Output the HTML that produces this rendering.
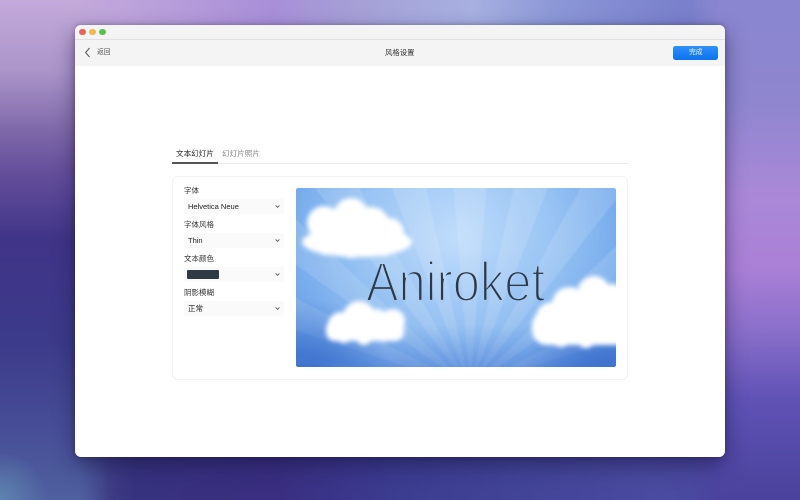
<!DOCTYPE html>
<html lang="zh"><head><meta charset="utf-8"><title>风格设置</title>
<style>
*{box-sizing:border-box;margin:0;padding:0}
html,body{width:800px;height:500px;overflow:hidden;background:#4a3f9c;font-family:"Liberation Sans","Noto Sans CJK SC",sans-serif}
#root{position:absolute;left:0;top:0;width:800px;height:500px;overflow:hidden}
#bg{position:absolute;left:0;top:0;display:block}
#win{position:absolute;left:75px;top:25px;width:650px;height:432px;background:#fff;border-radius:6px;overflow:hidden;box-shadow:0 8px 20px rgba(20,15,60,.5),0 0 5px rgba(20,15,60,.3)}
#tb{position:absolute;left:0;top:0;width:650px;height:41px;background:#f4f4f5}
#line{position:absolute;left:0;top:14px;width:650px;height:1px;background:#e0e0e2}
.dot{position:absolute;top:4px;width:6.4px;height:6.4px;border-radius:50%}
.t{position:absolute;white-space:nowrap;line-height:10px;filter:blur(.25px)}
.sel{position:absolute;left:184px;width:100px;height:15px;background:#fafafa;border-radius:2px;font-size:7.5px;line-height:15px;padding-left:4px;color:#222;white-space:nowrap}
.sel svg{position:absolute;left:91px;top:5px}
.lb{position:absolute;left:184px;font-size:7.5px;line-height:10px;color:#333;white-space:nowrap;filter:blur(.25px)}
#page{position:absolute;left:0;top:0;width:800px;height:500px;overflow:hidden}
</style></head><body><div id="root">
<svg id="bg" width="800" height="500" viewBox="0 0 800 500">
<defs>
<linearGradient id="gt" x1="0" y1="0" x2="800" y2="0" gradientUnits="userSpaceOnUse">
<stop offset="0" stop-color="#c5acdb"/><stop offset=".16" stop-color="#bda3da"/><stop offset=".34" stop-color="#a88fd8"/><stop offset=".44" stop-color="#a59fd6"/><stop offset=".59" stop-color="#a7b0e0"/><stop offset=".7" stop-color="#8a96d6"/><stop offset=".85" stop-color="#7a80cc"/><stop offset="1" stop-color="#8a82cc"/></linearGradient>
<linearGradient id="gb" x1="0" y1="0" x2="800" y2="0" gradientUnits="userSpaceOnUse">
<stop offset="0" stop-color="#4a5896"/><stop offset=".1" stop-color="#45488c"/><stop offset=".17" stop-color="#37327e"/><stop offset=".34" stop-color="#392e80"/><stop offset=".5" stop-color="#3c3c90"/><stop offset=".65" stop-color="#424498"/><stop offset=".82" stop-color="#4a4aa0"/><stop offset="1" stop-color="#4c469e"/></linearGradient>
<linearGradient id="gl" x1="0" y1="0" x2="0" y2="500" gradientUnits="userSpaceOnUse">
<stop offset="0" stop-color="#c4aadb"/><stop offset=".14" stop-color="#ab95c9"/><stop offset=".26" stop-color="#8069aa"/><stop offset=".34" stop-color="#66509c"/><stop offset=".48" stop-color="#403488"/><stop offset=".68" stop-color="#3c3a8a"/><stop offset=".84" stop-color="#464c96"/><stop offset="1" stop-color="#4f609e"/></linearGradient>
<linearGradient id="gr" x1="0" y1="0" x2="0" y2="500" gradientUnits="userSpaceOnUse">
<stop offset="0" stop-color="#8a86d0"/><stop offset=".2" stop-color="#8e86cf"/><stop offset=".4" stop-color="#ab88d8"/><stop offset=".54" stop-color="#a97fd6"/><stop offset=".66" stop-color="#8a6fca"/><stop offset=".8" stop-color="#5f52b5"/><stop offset="1" stop-color="#4a429c"/></linearGradient>
<radialGradient id="gc" gradientUnits="userSpaceOnUse" cx="0" cy="500" r="48"><stop offset="0" stop-color="#5e84b0"/><stop offset="1" stop-color="#5e84b0" stop-opacity="0"/></radialGradient>
<linearGradient id="ml" x1="0" y1="0" x2="110" y2="0" gradientUnits="userSpaceOnUse"><stop offset=".72" stop-color="#fff"/><stop offset="1" stop-color="#000"/></linearGradient>
<linearGradient id="mr" x1="690" y1="0" x2="800" y2="0" gradientUnits="userSpaceOnUse"><stop offset="0" stop-color="#000"/><stop offset=".28" stop-color="#fff"/></linearGradient>
<mask id="mL" maskUnits="userSpaceOnUse" x="0" y="0" width="800" height="500"><rect width="800" height="500" fill="url(#ml)"/></mask>
<mask id="mR" maskUnits="userSpaceOnUse" x="0" y="0" width="800" height="500"><rect width="800" height="500" fill="url(#mr)"/></mask>
</defs>
<rect width="800" height="250" fill="url(#gt)"/>
<rect y="250" width="800" height="250" fill="url(#gb)"/>
<rect width="110" height="500" fill="url(#gl)" mask="url(#mL)"/>
<rect x="690" width="110" height="500" fill="url(#gr)" mask="url(#mR)"/>
<rect y="440" width="60" height="60" fill="url(#gc)"/>
</svg>

<div id="win">
<div id="tb"></div>
<div id="line"></div>
<div class="dot" style="left:4.4px;background:#e7655c"></div>
<div class="dot" style="left:14.4px;background:#f3b84e"></div>
<div class="dot" style="left:24.4px;background:#5cc04f"></div>
</div>

<div id="page">
<svg style="position:absolute;left:84px;top:47px" width="8" height="11" viewBox="0 0 8 11"><path d="M5.5 1 L1.6 5.5 L5.5 10" fill="none" stroke="#555" stroke-width="1"/></svg>
<div class="t" style="left:97px;top:48px;font-size:6.8px;color:#555">返回</div>
<div class="t" style="left:385px;top:48px;font-size:7.4px;color:#333">风格设置</div>
<div style="position:absolute;left:673px;top:46px;width:45px;height:14px;border-radius:2.5px;background:linear-gradient(#2d90fb,#0c72f0)"></div>
<div class="t" style="left:689px;top:48px;font-size:6.8px;color:#f0f6ff">完成</div>

<div class="t" style="left:176px;top:149px;font-size:7.6px;color:#222">文本幻灯片</div>
<div class="t" style="left:222px;top:149px;font-size:7.6px;color:#888">幻灯片照片</div>
<div style="position:absolute;left:172px;top:163px;width:456px;height:1px;background:#e9e9e9"></div>
<div style="position:absolute;left:172px;top:162px;width:46px;height:1.5px;background:#555"></div>

<div style="position:absolute;left:172px;top:176px;width:456px;height:204px;border:1px solid #f1f1f2;border-radius:6px"></div>

<div class="lb" style="top:186px">字体</div>
<div class="sel" style="top:199px">Helvetica Neue<svg width="5" height="5" viewBox="0 0 5 5"><path d="M.6 1.4 L2.5 3.4 L4.4 1.4" fill="none" stroke="#555" stroke-width=".9"/></svg></div>
<div class="lb" style="top:220px">字体风格</div>
<div class="sel" style="top:233px">Thin<svg width="5" height="5" viewBox="0 0 5 5"><path d="M.6 1.4 L2.5 3.4 L4.4 1.4" fill="none" stroke="#555" stroke-width=".9"/></svg></div>
<div class="lb" style="top:254px">文本颜色</div>
<div class="sel" style="top:267px"><svg width="5" height="5" viewBox="0 0 5 5"><path d="M.6 1.4 L2.5 3.4 L4.4 1.4" fill="none" stroke="#555" stroke-width=".9"/></svg><div style="position:absolute;left:3px;top:3px;width:32px;height:9px;background:#303a45;border-radius:1px"></div></div>
<div class="lb" style="top:288px">阴影模糊</div>
<div class="sel" style="top:301px">正常<svg width="5" height="5" viewBox="0 0 5 5"><path d="M.6 1.4 L2.5 3.4 L4.4 1.4" fill="none" stroke="#555" stroke-width=".9"/></svg></div>

<svg style="position:absolute;left:296px;top:188px;border-radius:2px;display:block" width="320" height="179" viewBox="0 0 320 179">
<defs>
<radialGradient id="sky" gradientUnits="userSpaceOnUse" cx="160" cy="50" r="200">
<stop offset="0" stop-color="#c0dcfb"/><stop offset=".5" stop-color="#97c3f3"/><stop offset="1" stop-color="#649ee8"/></radialGradient>
<linearGradient id="bot" x1="0" y1="0" x2="0" y2="1"><stop offset="0" stop-color="#3f74cf" stop-opacity="0"/><stop offset=".65" stop-color="#3f74cf" stop-opacity=".06"/><stop offset="1" stop-color="#3a6dcc" stop-opacity=".45"/></linearGradient>
<radialGradient id="cornL" gradientUnits="userSpaceOnUse" cx="10" cy="195" r="85"><stop offset="0" stop-color="#3568c8" stop-opacity=".9"/><stop offset="1" stop-color="#3568c8" stop-opacity="0"/></radialGradient>
<radialGradient id="cornR" gradientUnits="userSpaceOnUse" cx="310" cy="195" r="85"><stop offset="0" stop-color="#3568c8" stop-opacity=".9"/><stop offset="1" stop-color="#3568c8" stop-opacity="0"/></radialGradient>
<filter id="cl" x="-20%" y="-20%" width="140%" height="140%"><feGaussianBlur stdDeviation="2.3"/></filter>
<filter id="rb" x="-10%" y="-10%" width="120%" height="120%"><feGaussianBlur stdDeviation=".8"/></filter>
<filter id="sh" x="-20%" y="-40%" width="140%" height="180%"><feGaussianBlur stdDeviation="1.7"/></filter>
<mask id="thin" maskUnits="userSpaceOnUse" x="0" y="0" width="320" height="179">
<text x="70" y="113.2" font-size="56" textLength="179" lengthAdjust="spacingAndGlyphs" font-family="Liberation Sans" fill="#fff" stroke="#000" stroke-width="2.5">Aniroket</text>
</mask>
<clipPath id="c"><rect width="320" height="179" rx="2"/></clipPath>
</defs>
<g clip-path="url(#c)">
<rect width="320" height="179" fill="url(#sky)"/>
<g fill="#fff" opacity=".13" filter="url(#rb)">
<polygon points="174,199 145,-150 203,-150"/>
<polygon points="174,199 249,-143 302,-127"/>
<polygon points="174,199 99,-143 46,-127"/>
<polygon points="174,199 344,-107 389,-77"/>
<polygon points="174,199 4,-107 -41,-77"/>
<polygon points="174,199 426,-44 461,-2"/>
<polygon points="174,199 -78,-44 -113,-2"/>
<polygon points="174,199 486,40 507,91"/>
<polygon points="174,199 -138,40 -159,91"/>
<polygon points="174,199 519,138 524,193"/>
<polygon points="174,199 -171,138 -176,193"/>
</g>
<rect y="60" width="320" height="119" fill="url(#bot)"/>
<rect y="60" width="320" height="119" fill="url(#cornL)"/>
<rect y="60" width="320" height="119" fill="url(#cornR)"/>
<g fill="#fff" filter="url(#cl)">
<circle cx="28" cy="35" r="17"/><circle cx="55" cy="27" r="17"/><circle cx="76" cy="36" r="17"/><circle cx="93" cy="45" r="15"/>
<ellipse cx="58" cy="40" rx="40" ry="18"/>
<ellipse cx="61" cy="54" rx="55" ry="15"/><circle cx="55" cy="55" r="15"/><circle cx="30" cy="56" r="11"/><circle cx="88" cy="58" r="10"/>
<circle cx="63" cy="129" r="16"/><circle cx="45" cy="137" r="13"/><circle cx="80" cy="135" r="14"/><circle cx="97" cy="133" r="12"/>
<ellipse cx="70" cy="138" rx="30" ry="15"/>
<rect x="30" y="132" width="78" height="21" rx="9"/><circle cx="68" cy="149" r="8"/><circle cx="88" cy="147" r="7"/><circle cx="48" cy="148" r="7"/>
<circle cx="298" cy="104" r="16"/><circle cx="273" cy="116" r="17"/><circle cx="316" cy="112" r="16"/><circle cx="256" cy="130" r="16"/><circle cx="285" cy="118" r="16"/>
<rect x="270" y="105" width="60" height="30"/>
<rect x="236" y="122" width="100" height="35" rx="15"/><circle cx="265" cy="150" r="9"/><circle cx="290" cy="151" r="9"/><circle cx="312" cy="150" r="7"/>
</g>
<rect fill="#1f2c44" opacity=".55" y="2.5" width="320" height="179" mask="url(#thin)" filter="url(#sh)"/>
<rect fill="#2d3845" width="320" height="179" mask="url(#thin)"/>
</g>
</svg>
</div>
</div></body></html>
